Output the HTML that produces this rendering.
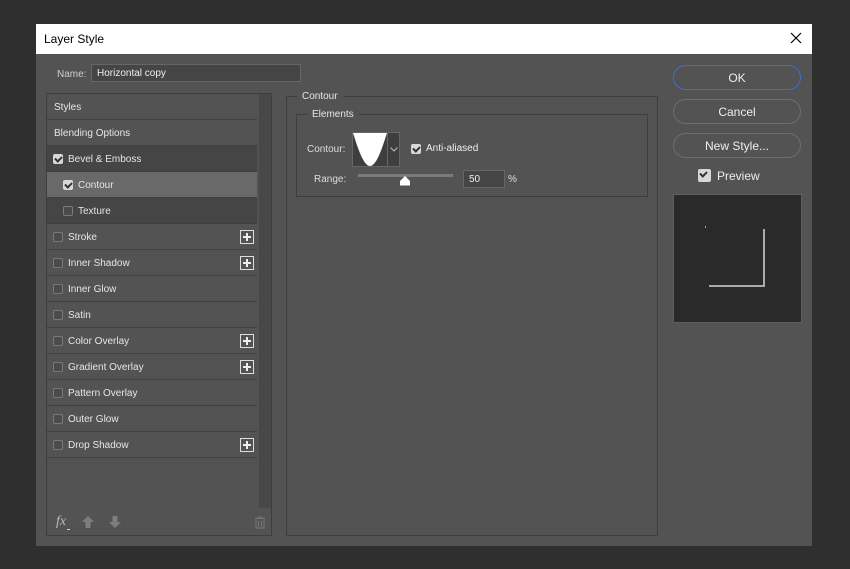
<!DOCTYPE html>
<html><head><style>
*{margin:0;padding:0;box-sizing:border-box}
body{width:850px;height:569px;background:#2f2f2f;font-family:"Liberation Sans","DejaVu Sans",sans-serif;position:relative;overflow:hidden;color:#e2e2e2}
.a{position:absolute}
.dlg{left:36px;top:24px;width:776px;height:522px;background:#535353}
.title{left:36px;top:24px;width:776px;height:30px;background:#fff;color:#000;font-size:12px;line-height:31px;padding-left:8px}
.row{position:absolute;left:47px;width:210px;height:26px;font-size:10px;line-height:27px;border-bottom:1px solid #404040;color:#e6e6e6}
.cb{position:absolute;top:8px;width:10px;height:10px;border:1px solid #7a7a7a;border-radius:2px;background:#4a4a4a}
.cb.on{background:#d8d8d8;border-color:#d8d8d8}
.cb.on::after{content:"";position:absolute;left:2px;top:0px;width:3px;height:5px;border:solid #333;border-width:0 2px 2px 0;transform:rotate(45deg)}
.plus{position:absolute;left:193px;top:6px;width:14px;height:14px;border:1px solid #ddd}
.plus::before{content:"";position:absolute;left:2px;top:5px;width:8px;height:2px;background:#eee}
.plus::after{content:"";position:absolute;left:5px;top:2px;width:2px;height:8px;background:#eee}
.btn{position:absolute;left:673px;width:128px;height:25px;border:1px solid #6e6e6e;border-radius:13px;text-align:center;font-size:12px;line-height:24px;color:#eee}
fieldset{position:absolute;border:1px solid #3e3e3e;font-size:10px}
legend{padding:0 5px;margin-left:10px;color:#e6e6e6}
</style></head><body>
<div class="a dlg"></div>
<div class="a title">Layer Style</div>
<svg class="a" style="left:790px;top:32px" width="12" height="12"><path d="M1 1L11 11M11 1L1 11" stroke="#000" stroke-width="1.2"/></svg>

<div class="a" style="left:57px;top:69px;font-size:10px;color:#cfcfcf">Name:</div>
<div class="a" style="left:91px;top:64px;width:210px;height:18px;background:#454545;border:1px solid #666;font-size:10px;line-height:18px;padding-left:5px;color:#eee">Horizontal copy</div>

<div class="a" style="left:46px;top:93px;width:226px;height:443px;border:1px solid #3e3e3e"></div>
<div class="a" style="left:259px;top:94px;width:12px;height:414px;background:#484848"></div>

<div class="row" style="top:94px;padding-left:7px">Styles</div>
<div class="row" style="top:120px;padding-left:7px">Blending Options</div>
<div class="row" style="top:146px;background:#454545;padding-left:21px"><span class="cb on" style="left:6px"></span>Bevel &amp; Emboss</div>
<div class="row" style="top:172px;background:#696969;padding-left:31px"><span class="cb on" style="left:16px"></span>Contour</div>
<div class="row" style="top:198px;background:#454545;padding-left:31px"><span class="cb" style="left:16px"></span>Texture</div>
<div class="row" style="top:224px;padding-left:21px"><span class="cb" style="left:6px"></span>Stroke<span class="plus"></span></div>
<div class="row" style="top:250px;padding-left:21px"><span class="cb" style="left:6px"></span>Inner Shadow<span class="plus"></span></div>
<div class="row" style="top:276px;padding-left:21px"><span class="cb" style="left:6px"></span>Inner Glow</div>
<div class="row" style="top:302px;padding-left:21px"><span class="cb" style="left:6px"></span>Satin</div>
<div class="row" style="top:328px;padding-left:21px"><span class="cb" style="left:6px"></span>Color Overlay<span class="plus"></span></div>
<div class="row" style="top:354px;padding-left:21px"><span class="cb" style="left:6px"></span>Gradient Overlay<span class="plus"></span></div>
<div class="row" style="top:380px;padding-left:21px"><span class="cb" style="left:6px"></span>Pattern Overlay</div>
<div class="row" style="top:406px;padding-left:21px"><span class="cb" style="left:6px"></span>Outer Glow</div>
<div class="row" style="top:432px;padding-left:21px"><span class="cb" style="left:6px"></span>Drop Shadow<span class="plus"></span></div>

<div class="a" style="left:56px;top:514px;font-size:14px;font-style:italic;font-family:'Liberation Serif',serif;color:#bbb">fx</div>
<div class="a" style="left:67px;top:529px;width:3px;height:1px;background:#ccc"></div>
<svg class="a" style="left:82px;top:516px" width="12" height="12"><path d="M6 0L12 6H8.5V12H3.5V6H0Z" fill="#7e7e7e"/></svg>
<svg class="a" style="left:109px;top:516px" width="12" height="12"><path d="M6 12L12 6H8.5V0H3.5V6H0Z" fill="#7e7e7e"/></svg>
<svg class="a" style="left:254px;top:516px" width="12" height="13"><path d="M1 2.5H11M4 2.5V1H8V2.5M2 3.5V12H10V3.5M4.5 5V11M7.5 5V11" stroke="#777" fill="none"/></svg>

<fieldset style="left:286px;top:91px;width:372px;height:445px"><legend>Contour</legend></fieldset>
<fieldset style="left:296px;top:109px;width:352px;height:88px"><legend>Elements</legend></fieldset>
<div class="a" style="left:307px;top:144px;font-size:10px;color:#ddd">Contour:</div>
<div class="a" style="left:352px;top:132px;width:48px;height:35px;background:#3e3e3e;border:1px solid #666"></div>
<svg class="a" style="left:353px;top:133px" width="34" height="33"><path d="M0 0H34C30 12 24 33 17 33C10 33 4 12 0 0Z" fill="#fff"/></svg>
<div class="a" style="left:387px;top:133px;width:1px;height:33px;background:#666"></div>
<svg class="a" style="left:390px;top:147px" width="8" height="5"><path d="M0.5 0.5L4 4L7.5 0.5" stroke="#bbb" fill="none"/></svg>
<span class="cb on" style="position:absolute;left:411px;top:144px"></span>
<div class="a" style="left:426px;top:143px;font-size:10px;color:#eee">Anti-aliased</div>
<div class="a" style="left:314px;top:174px;font-size:10px;color:#ddd">Range:</div>
<div class="a" style="left:358px;top:174px;width:95px;height:3px;background:#7a7a7a"></div>
<svg class="a" style="left:399px;top:176px" width="12" height="10"><path d="M6 0L11 5V9.5H1V5Z" fill="#fff"/></svg>
<div class="a" style="left:463px;top:170px;width:42px;height:18px;background:#454545;border:1px solid #666;font-size:10px;line-height:18px;padding-left:5px;color:#eee">50</div>
<div class="a" style="left:508px;top:174px;font-size:10px;color:#ddd">%</div>

<div class="btn" style="top:65px;border-color:#3f6fc9;border-width:1.5px">OK</div>
<div class="btn" style="top:99px">Cancel</div>
<div class="btn" style="top:133px">New Style...</div>
<span class="cb on" style="position:absolute;left:698px;top:169px;width:13px;height:13px"></span>
<div class="a" style="left:717px;top:169px;font-size:12px;color:#eee">Preview</div>
<div class="a" style="left:673px;top:194px;width:129px;height:129px;background:#2a2a2a;border:1px solid #5e5e5e"></div>
<div class="a" style="left:705px;top:226px;width:1px;height:2px;background:#aaa"></div>
<div class="a" style="left:763px;top:229px;width:2px;height:58px;background:#aaa"></div>
<div class="a" style="left:709px;top:285px;width:56px;height:2px;background:#aaa"></div>
</body></html>
